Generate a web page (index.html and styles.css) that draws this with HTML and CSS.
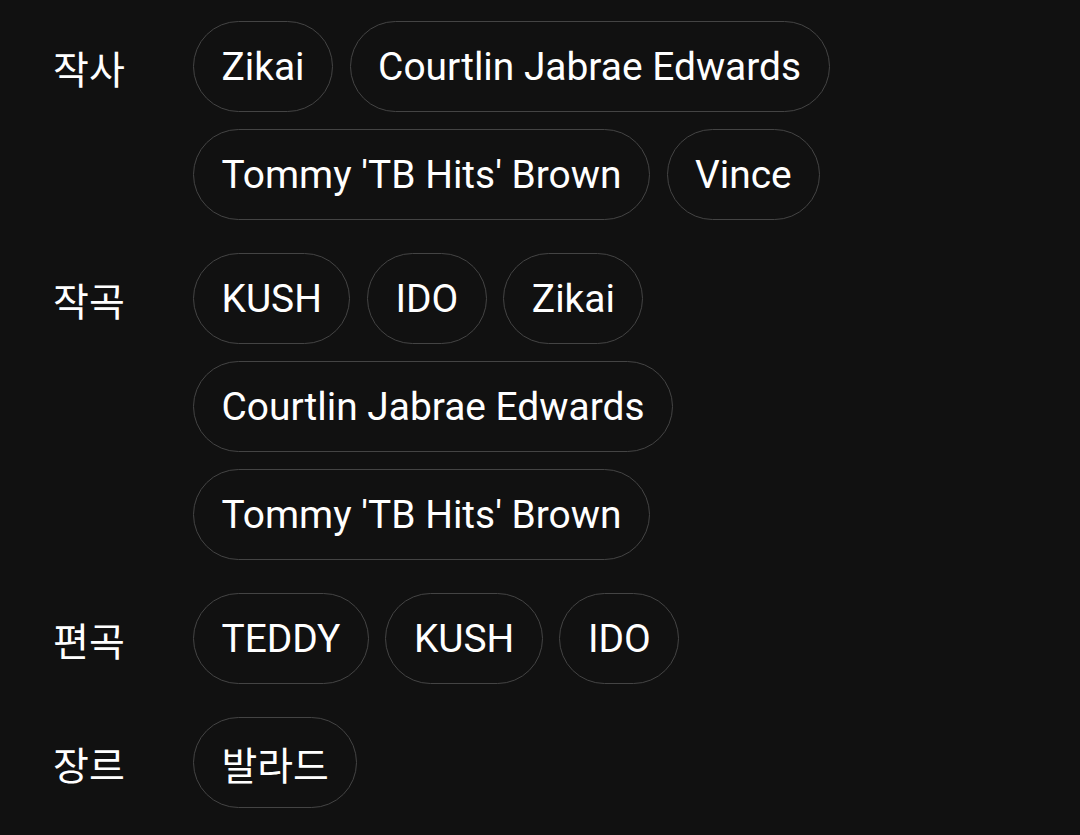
FILE: index.html
```html
<!DOCTYPE html>
<html lang="ko">
<head>
<meta charset="utf-8">
<link rel="stylesheet" href="styles.css">
</head>
<body>
<div class="credits">
  <div class="group">
    <div class="label">작사</div>
    <div class="chips">
      <span class="chip">Zikai</span>
      <span class="chip">Courtlin Jabrae Edwards</span>
      <span class="chip">Tommy 'TB Hits' Brown</span>
      <span class="chip">Vince</span>
    </div>
  </div>
  <div class="group">
    <div class="label">작곡</div>
    <div class="chips">
      <span class="chip">KUSH</span>
      <span class="chip">IDO</span>
      <span class="chip">Zikai</span>
      <span class="chip">Courtlin Jabrae Edwards</span>
      <span class="chip">Tommy 'TB Hits' Brown</span>
    </div>
  </div>
  <div class="group">
    <div class="label">편곡</div>
    <div class="chips">
      <span class="chip">TEDDY</span>
      <span class="chip">KUSH</span>
      <span class="chip">IDO</span>
    </div>
  </div>
  <div class="group">
    <div class="label">장르</div>
    <div class="chips">
      <span class="chip">발라드</span>
    </div>
  </div>
</div>
</body>
</html>
```

FILE: styles.css
```css
html, body {
  margin: 0;
  background: #111111;
}
body {
  width: 1080px;
  height: 835px;
  overflow: hidden;
}
.credits {
  padding: 21px 0 0 53px;
  display: flex;
  flex-direction: column;
  gap: 33px;
}
.group {
  display: grid;
  grid-template-columns: 140px 1fr;
  align-items: start;
}
.label {
  height: 91px;
  display: flex;
  align-items: center;
  font-family: "Noto Sans CJK KR", "Noto Sans", sans-serif;
  font-size: 39px;
  color: #ffffff;
}
.chips {
  display: flex;
  flex-wrap: wrap;
  gap: 17px 16.5px;
  max-width: 660px;
}
.chip {
  box-sizing: border-box;
  height: 91px;
  padding: 0 27.5px;
  display: flex;
  align-items: center;
  border: 1.5px solid #444444;
  border-radius: 46px;
  font-family: Roboto, "Noto Sans CJK KR", sans-serif;
  font-size: 38.9px;
  color: #ffffff;
  white-space: nowrap;
}
```
